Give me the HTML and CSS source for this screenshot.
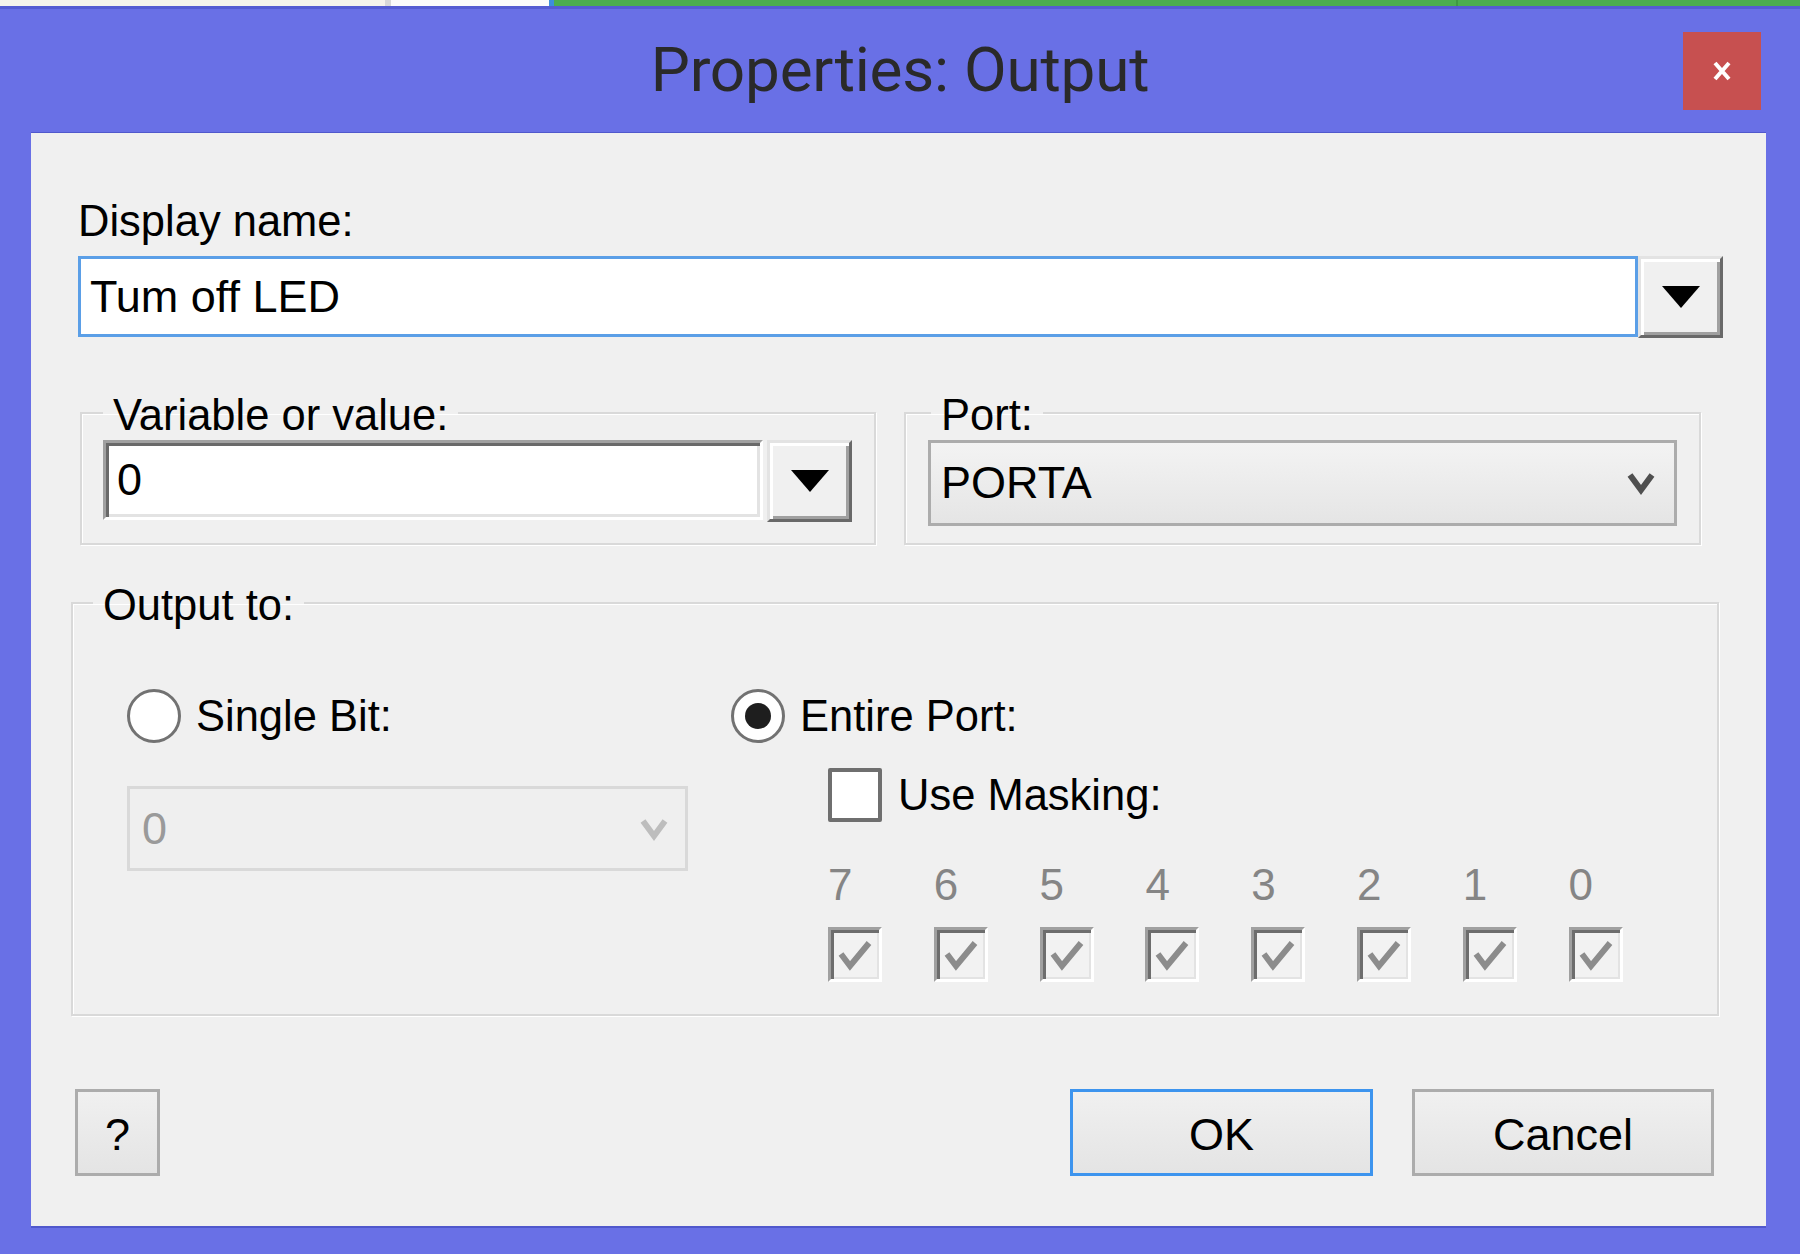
FILE: index.html
```html
<!DOCTYPE html>
<html lang="en">
<head>
<meta charset="utf-8">
<title>Properties: Output</title>
<link rel="stylesheet" href="styles.css">
</head>
<body>
<div class="strip">
  <div class="seg seg-cream"></div>
  <div class="seg seg-sep"></div>
  <div class="seg seg-white"></div>
  <div class="seg seg-blue"></div>
  <div class="seg seg-green"></div>
  <div class="seg seg-sep2"></div>
  <div class="seg seg-green2"></div>
</div>
<div class="window">
  <div class="titlebar">
    <div class="title">Properties: Output</div>
    <div class="tb-right">
      <button class="close" type="button" aria-label="Close">
        <svg width="22" height="20" viewBox="0 0 22 20"><path d="M4 2 L18 18 M18 2 L4 18" stroke="#fff" stroke-width="4" fill="none"/></svg>
      </button>
    </div>
  </div>
  <div class="content">
    <div class="label display-label">Display name:</div>
    <div class="combo-row combo-main">
      <div class="textbox focused">Tum off LED</div>
      <div class="dropbtn">
        <svg width="38" height="22" viewBox="0 0 38 22"><path d="M0 0 H38 L19 22 Z" fill="#000"/></svg>
      </div>
    </div>

    <div class="row2">
      <fieldset class="group group-var">
        <legend>Variable or value:</legend>
        <div class="combo-row combo-var">
          <div class="textbox sunken">0</div>
          <div class="dropbtn">
            <svg width="38" height="22" viewBox="0 0 38 22"><path d="M0 0 H38 L19 22 Z" fill="#000"/></svg>
          </div>
        </div>
      </fieldset>
      <fieldset class="group group-port">
        <legend>Port:</legend>
        <div class="select">
          <span>PORTA</span>
          <svg class="chev" width="28" height="26" viewBox="0 0 28 26"><path d="M3 5 L14 20 L25 5" fill="none" stroke="#4f4f4f" stroke-width="6"/></svg>
        </div>
      </fieldset>
    </div>

    <fieldset class="group group-output">
      <legend>Output to:</legend>
      <div class="out-cols">
        <div class="col-single">
          <div class="radio-row">
            <span class="radio"></span>
            <span class="label">Single Bit:</span>
          </div>
          <div class="select disabled">
            <span>0</span>
            <svg class="chev" width="28" height="26" viewBox="0 0 28 26"><path d="M3 5 L14 20 L25 5" fill="none" stroke="#bdbdbd" stroke-width="6"/></svg>
          </div>
        </div>
        <div class="col-entire">
          <div class="radio-row">
            <span class="radio checked"><span class="dot"></span></span>
            <span class="label">Entire Port:</span>
          </div>
          <div class="mask">
            <div class="check-row">
              <span class="checkbox"></span>
              <span class="label">Use Masking:</span>
            </div>
            <div class="bits">
              <div class="bit"><span class="bit-num">7</span><span class="bitbox"><svg width="36" height="32" viewBox="0 0 36 32"><path d="M4 15 L13 27 L32 4" fill="none" stroke="#8c8c8c" stroke-width="6"/></svg></span></div>
              <div class="bit"><span class="bit-num">6</span><span class="bitbox"><svg width="36" height="32" viewBox="0 0 36 32"><path d="M4 15 L13 27 L32 4" fill="none" stroke="#8c8c8c" stroke-width="6"/></svg></span></div>
              <div class="bit"><span class="bit-num">5</span><span class="bitbox"><svg width="36" height="32" viewBox="0 0 36 32"><path d="M4 15 L13 27 L32 4" fill="none" stroke="#8c8c8c" stroke-width="6"/></svg></span></div>
              <div class="bit"><span class="bit-num">4</span><span class="bitbox"><svg width="36" height="32" viewBox="0 0 36 32"><path d="M4 15 L13 27 L32 4" fill="none" stroke="#8c8c8c" stroke-width="6"/></svg></span></div>
              <div class="bit"><span class="bit-num">3</span><span class="bitbox"><svg width="36" height="32" viewBox="0 0 36 32"><path d="M4 15 L13 27 L32 4" fill="none" stroke="#8c8c8c" stroke-width="6"/></svg></span></div>
              <div class="bit"><span class="bit-num">2</span><span class="bitbox"><svg width="36" height="32" viewBox="0 0 36 32"><path d="M4 15 L13 27 L32 4" fill="none" stroke="#8c8c8c" stroke-width="6"/></svg></span></div>
              <div class="bit"><span class="bit-num">1</span><span class="bitbox"><svg width="36" height="32" viewBox="0 0 36 32"><path d="M4 15 L13 27 L32 4" fill="none" stroke="#8c8c8c" stroke-width="6"/></svg></span></div>
              <div class="bit"><span class="bit-num">0</span><span class="bitbox"><svg width="36" height="32" viewBox="0 0 36 32"><path d="M4 15 L13 27 L32 4" fill="none" stroke="#8c8c8c" stroke-width="6"/></svg></span></div>
            </div>
          </div>
        </div>
      </div>
    </fieldset>

    <div class="buttons">
      <button class="btn help" type="button">?</button>
      <button class="btn ok" type="button">OK</button>
      <button class="btn cancel" type="button">Cancel</button>
    </div>
  </div>
</div>
</body>
</html>
```

FILE: styles.css
```css
* { box-sizing: border-box; }
html, body { margin: 0; padding: 0; }
body {
  width: 1800px;
  height: 1254px;
  overflow: hidden;
  background: #6970e6;
  font-family: "Liberation Sans", Arial, sans-serif;
  color: #000;
}

/* taskbar-like strip at the very top */
.strip { display: flex; height: 6px; }
.seg-cream { width: 385px; background: #f6f4ec; }
.seg-sep { width: 6px; background: #d9d9d9; }
.seg-white { width: 158px; background: #fbfbfb; }
.seg-blue { width: 5px; background: #3d8fdc; }
.seg-green { width: 902px; background: #4cad4f; }
.seg-sep2 { width: 2px; background: #3f9843; }
.seg-green2 { flex: 1; background: #4cad4f; }

/* window frame */
.window {
  height: 1248px;
  display: flex;
  flex-direction: column;
  background: #6970e6;
  border-top: 3px solid #555cd2;
}
.titlebar {
  height: 124px;
  flex: none;
  display: grid;
  grid-template-columns: 1fr auto 1fr;
  align-items: start;
}
.title {
  grid-column: 2;
  margin-top: 24px;
  font-family: Roboto, "Noto Sans", sans-serif;
  font-size: 62px;
  line-height: 74px;
  letter-spacing: -0.2px;
  color: #2a2a2a;
  white-space: nowrap;
}
.tb-right {
  grid-column: 3;
  justify-self: end;
  margin: 23px 39px 0 0;
}
.close {
  width: 78px;
  height: 78px;
  padding: 0;
  border: 0;
  background: #c75050;
  display: flex;
  align-items: center;
  justify-content: center;
}

.content {
  flex: none;
  height: 1093px;
  margin: 0 34px 0 31px;
  padding-top: 63px;
  background: #f0f0f0;
  box-shadow: 0 -1px 0 #5058cc, 0 2px 0 #5058cc;
}

.label {
  font-size: 43.5px;
  line-height: 50px;
  white-space: nowrap;
}
.display-label { margin-left: 47px; }

.combo-row { display: flex; }
.combo-main { margin: 10px 0 0 47px; width: 1645px; }
.combo-var { gap: 4px; }

.textbox {
  flex: 1;
  height: 81px;
  background: #fff;
  font-size: 45px;
  line-height: 75px;
  padding-left: 9px;
  white-space: nowrap;
}
.textbox.focused { border: 3px solid #5b9fe7; }
.textbox.sunken {
  height: 80px;
  line-height: 74px;
  padding-left: 11px;
  border-top: 3px solid #a0a0a0;
  border-left: 3px solid #a0a0a0;
  border-right: 3px solid #fff;
  border-bottom: 3px solid #fff;
  box-shadow: inset 3px 3px 0 #696969, inset -3px -3px 0 #e3e3e3;
}

.dropbtn {
  flex: none;
  width: 85px;
  height: 82px;
  display: flex;
  align-items: center;
  justify-content: center;
  background: #f0f0f0;
  border-top: 3px solid #e3e3e3;
  border-left: 3px solid #e3e3e3;
  border-right: 3px solid #696969;
  border-bottom: 3px solid #696969;
  box-shadow: inset 3px 3px 0 #fff, inset -3px -3px 0 #a0a0a0;
}

/* group boxes */
.row2 { display: flex; gap: 28px; margin: 48px 0 0 49px; }
.group {
  margin: 0;
  min-width: 0;
  border: 2px solid #d9d9d9;
  box-shadow: inset 1px 1px 0 #fff, 1px 1px 0 #fff;
}
.group legend {
  font-size: 43.5px;
  line-height: 50px;
  padding: 4px 10px 0;
  white-space: nowrap;
}
.group-var { width: 796px; padding: 0 22px 21px 21px; }
.group-port { width: 797px; padding: 0 22px 0 22px; }
.group-port legend { margin-left: 3px; }

.select {
  height: 86px;
  display: flex;
  align-items: center;
  justify-content: space-between;
  padding: 0 19px 0 10px;
  border: 3px solid #acacac;
  background: linear-gradient(#f3f3f3, #e5e5e5);
  font-size: 45px;
  line-height: 80px;
  white-space: nowrap;
}
.select.disabled {
  width: 561px;
  height: 85px;
  margin-top: 43px;
  padding: 0 17px 0 12px;
  border-color: #d9d9d9;
  background: #efefef;
  color: #9a9a9a;
}

.group-output { width: 1648px; margin: 31px 0 0 40px; padding: 59px 0 32px 20px; }
.out-cols { display: flex; gap: 42px; margin-left: 34px; }
.col-single { width: 562px; display: flex; flex-direction: column; }
.col-entire { display: flex; flex-direction: column; }

.radio-row { display: flex; align-items: center; gap: 15px; height: 54px; }
.radio {
  flex: none;
  width: 54px;
  height: 54px;
  border-radius: 50%;
  border: 3px solid #727272;
  background: #fff;
  display: flex;
  align-items: center;
  justify-content: center;
}
.radio .dot { width: 26px; height: 26px; border-radius: 50%; background: #1e1e1e; }

.mask { margin: 25px 0 0 97px; }
.check-row { display: flex; align-items: center; gap: 16px; }
.checkbox {
  flex: none;
  width: 54px;
  height: 54px;
  border: 4px solid #6f6f6f;
  border-radius: 2px;
  background: #fff;
}

.bits {
  display: grid;
  grid-template-columns: repeat(8, 105.8px);
  margin-top: 38px;
}
.bit { display: flex; flex-direction: column; align-items: flex-start; }
.bit-num {
  font-size: 44px;
  line-height: 50px;
  color: #858585;
}
.bitbox {
  margin-top: 17px;
  width: 54px;
  height: 55px;
  display: flex;
  align-items: center;
  justify-content: center;
  background: #f2f2f2;
  border-top: 3px solid #a0a0a0;
  border-left: 3px solid #a0a0a0;
  border-right: 3px solid #fff;
  border-bottom: 3px solid #fff;
  box-shadow: inset 3px 3px 0 #6d6d6d, inset -2px -2px 0 #e3e3e3;
}

/* bottom buttons */
.buttons { display: flex; gap: 39px; margin: 73px 52px 0 44px; }
.btn {
  height: 87px;
  padding: 4px 0 0;
  font-family: inherit;
  font-size: 45px;
  line-height: 77px;
  color: #000;
  background: linear-gradient(#f0f0f0, #e4e4e4);
  border: 3px solid #acacac;
}
.help { width: 85px; margin-right: auto; }
.ok { width: 303px; border-color: #3d94ee; }
.cancel { width: 302px; }
```
